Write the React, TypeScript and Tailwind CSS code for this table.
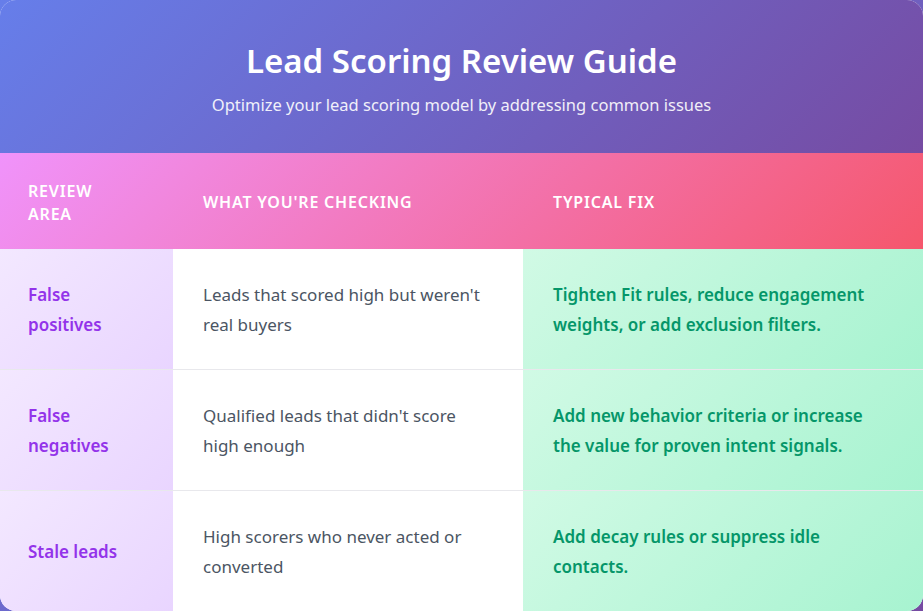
import React from 'react';

const rows = [
  {
    area: 'False positives',
    checking: "Leads that scored high but weren't real buyers",
    fix: 'Tighten Fit rules, reduce engagement weights, or add exclusion filters.',
  },
  {
    area: 'False negatives',
    checking: "Qualified leads that didn't score high enough",
    fix: 'Add new behavior criteria or increase the value for proven intent signals.',
  },
  {
    area: 'Stale leads',
    checking: 'High scorers who never acted or converted',
    fix: 'Add decay rules or suppress idle contacts.',
  },
];

const App: React.FC = () => {
  return (
    <div className="min-h-screen bg-[linear-gradient(135deg,#667eea_0%,#764ba2_100%)] font-['Noto_Sans','Segoe_UI',sans-serif]">
      <div className="w-[923px] h-[611px] rounded-2xl overflow-hidden bg-white">
        <div className="h-[153px] bg-[linear-gradient(135deg,#667eea_0%,#764ba2_100%)] text-white text-center pt-[41px]">
          <h1 className="text-[33px] leading-[40px] font-semibold">Lead Scoring Review Guide</h1>
          <p className="mt-[12px] text-[16.5px] leading-[24px] opacity-90">
            Optimize your lead scoring model by addressing common issues
          </p>
        </div>

        <div className="grid grid-cols-[173px_350px_1fr] h-[96px] pt-[3px] bg-[linear-gradient(135deg,#f093fb_0%,#f5576c_100%)] text-white uppercase font-semibold text-[16px] leading-[23px] tracking-[0.8px]">
          <div className="flex items-center pl-7 pr-7">
            <span className="block w-[100px]">Review Area</span>
          </div>
          <div className="flex items-center px-[30px]">What You're Checking</div>
          <div className="flex items-center px-[30px]">Typical Fix</div>
        </div>

        {rows.map((row, index) => (
          <div
            key={index}
            className={`grid grid-cols-[173px_350px_1fr] text-[17px] leading-[30px] ${index < rows.length - 1 ? 'border-b border-[#e8e8ec] h-[121px]' : 'h-[120px]'}`}
          >
            <div className="flex items-center pt-[2px] pl-7 pr-7 bg-[linear-gradient(135deg,#f3e8ff_0%,#e9d5ff_100%)] text-[#9333ea] font-semibold">
              {row.area}
            </div>
            <div className="flex items-center pt-[2px] px-[30px] bg-white text-[#4b5563]">
              {row.checking}
            </div>
            <div className="flex items-center pt-[2px] px-[30px] bg-[linear-gradient(135deg,#d1fae5_0%,#a7f3d0_100%)] text-[#059669] font-semibold">
              {row.fix}
            </div>
          </div>
        ))}
      </div>
    </div>
  );
};

export default App;
